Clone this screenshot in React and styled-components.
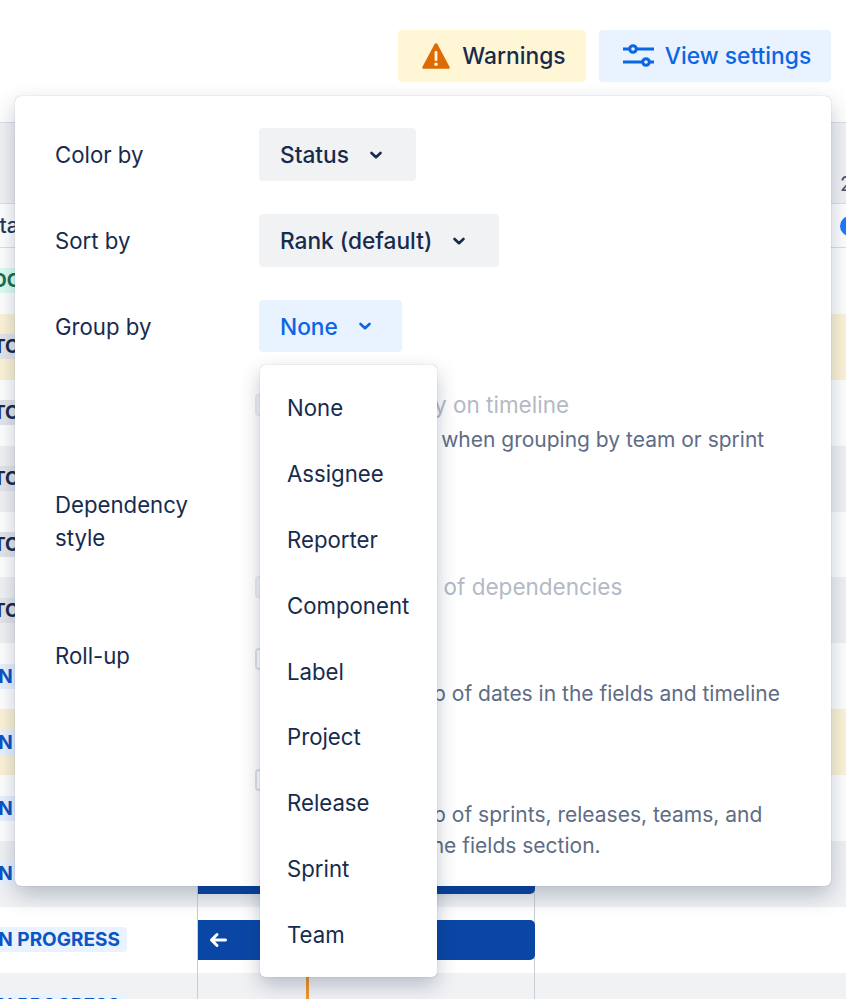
import React from "react";
import styled, { createGlobalStyle } from "styled-components";

const Global = createGlobalStyle`
  html, body { margin: 0; padding: 0; background: #fff; }
  body { font-family: Inter, "Liberation Sans", sans-serif; color: #172b4d; }
`;
const Page = styled.div`
  position: relative;
  width: 846px;
  height: 999px;
  overflow: hidden;
  background: #fff;
`;
const Toolbar = styled.div`
  display: flex;
  justify-content: flex-end;
  gap: 13px;
  height: 122px;
  box-sizing: border-box;
  padding: 30px 15px 0 0;
`;
const TopButton = styled.div`
  display: flex;
  align-items: center;
  justify-content: center;
  gap: ${(p) => p.$gap}px;
  width: ${(p) => p.$w}px;
  height: 52px;
  box-sizing: border-box;
  padding: 0 0 1px 4px;
  border-radius: 4px;
  background: ${(p) => p.$bg};
  color: ${(p) => p.$fg};
  font-size: 22.8px;
  font-weight: 500;
`;
const HeaderRow = styled.div`
  height: 82px;
  box-sizing: border-box;
  background: #f1f2f4;
  border-top: 1px solid #dcdfe4;
  border-bottom: 1px solid #dcdfe4;
  display: flex;
  justify-content: flex-end;
  align-items: flex-end;
  padding-bottom: 5px;
  color: #44546f;
  font-size: 20px;
`;
const HeaderYear = styled.span`
  width: 6px;
  overflow: hidden;
  padding-bottom: 2px;
`;
const FieldRow = styled.div`
  height: 44px;
  box-sizing: border-box;
  border-bottom: 1px solid #dcdfe4;
  display: flex;
  justify-content: space-between;
  align-items: center;
  font-size: 21px;
  color: #253858;
`;
const FieldName = styled.span`
  margin-left: -14px;
  font-weight: 500;
`;
const Dot = styled.span`
  width: 20px;
  height: 20px;
  margin-right: -14px;
  border-radius: 50%;
  background: #1d7afc;
`;
const Row = styled.div`
  display: grid;
  grid-template-columns: 197px 338px 1fr;
  height: 65.9px;
  background: ${(p) => p.$bg};
`;
const StatusCell = styled.div`
  display: flex;
  align-items: center;
`;
const Pill = styled.span`
  margin-left: -14px;
  height: 25px;
  display: flex;
  align-items: center;
  padding: 0 7px;
  border-radius: 4px;
  font-size: 19px;
  font-weight: 700;
  white-space: nowrap;
  background: ${(p) => p.$bg};
  color: ${(p) => p.$fg};
`;
const TimeCell = styled.div`
  position: relative;
  display: flex;
  align-items: center;
  border-left: 1px solid #c9ced6;
  border-right: 1px solid #c9ced6;
`;
const Bar = styled.div`
  width: calc(100% + 1px);
  flex: none;
  height: 40px;
  display: flex;
  align-items: center;
  padding-left: 11px;
  box-sizing: border-box;
  background: #0a47a5;
  border-radius: 0 5px 5px 0;
`;
const TodayLine = styled.div`
  position: absolute;
  left: 108px;
  top: 0;
  bottom: 0;
  width: 2.5px;
  background: #f0962a;
`;
const Panel = styled.div`
  position: absolute;
  left: 15px;
  top: 96px;
  width: 816px;
  height: 790px;
  box-sizing: border-box;
  padding: 32px 40px 0;
  background: #fff;
  border-radius: 6px;
  box-shadow: 0 0 1px rgba(9, 30, 66, 0.35), 0 9px 22px rgba(9, 30, 66, 0.25);
`;
const SettingRow = styled.div`
  display: grid;
  grid-template-columns: 204px 1fr;
  margin-top: ${(p) => p.$mt || 0}px;
`;
const Label = styled.div`
  font-size: 22.2px;
  line-height: 33px;
  max-width: 160px;
  padding-top: ${(p) => p.$pt || 0}px;
  color: #172b4d;
`;
const SelectWrap = styled.div`
  position: relative;
  width: max-content;
`;
const Select = styled.div`
  display: flex;
  align-items: center;
  width: max-content;
  gap: 19px;
  height: ${(p) => p.$h || 53}px;
  box-sizing: border-box;
  padding: 0 ${(p) => (p.$active ? 29 : 32)}px 0 21px;
  border-radius: 4px;
  font-size: 22.7px;
  font-weight: 500;
  background: ${(p) => (p.$active ? "#e9f2ff" : "#f1f2f4")};
  color: ${(p) => (p.$active ? "#0c66e4" : "#172b4d")};
`;
const Menu = styled.div`
  position: absolute;
  z-index: 2;
  left: 1px;
  top: 65px;
  width: 177px;
  height: 612px;
  box-sizing: border-box;
  padding: 10px 0 0;
  background: #fff;
  border-radius: 5px;
  box-shadow: 0 0 1px rgba(9, 30, 66, 0.4), 0 8px 20px rgba(9, 30, 66, 0.25);
`;
const MenuItem = styled.div`
  height: 65.8px;
  display: flex;
  align-items: center;
  padding-left: 27px;
  font-size: 22.2px;
  color: #172b4d;
`;
const CheckStack = styled.div`
  margin-left: -4px;
  display: flex;
  flex-direction: column;
`;
const CheckRow = styled.div`
  display: flex;
  align-items: center;
  gap: 15px;
  height: 33px;
  font-size: 22.5px;
  color: ${(p) => (p.$disabled ? "#b3bac5" : "#172b4d")};
  margin-top: ${(p) => p.$mt || 0}px;
`;
const Box = styled.span`
  width: 16px;
  height: 18px;
  flex: none;
  border: 2px solid ${(p) => (p.$disabled ? "#ebecf0" : "#dfe1e6")};
  border-radius: 4px;
  background: ${(p) => (p.$disabled ? "#f4f5f7" : "#fff")};
`;
const Help = styled.div`
  margin: 3px 0 0 27px;
  font-size: 21px;
  line-height: 31px;
  color: #5e6c84;
  white-space: nowrap;
`;

const Chevron = () => (
  <svg width="16" height="16" viewBox="0 0 16 16" fill="none" stroke="currentColor" strokeWidth="2.6" strokeLinecap="round" strokeLinejoin="round">
    <path d="M3.5 6 L8 10.2 L12.5 6" />
  </svg>
);
const WarnIcon = () => (
  <svg width="28" height="28" viewBox="0 0 28 28">
    <path d="M14 1.2 C14.6 1.2 15.1 1.5 15.4 2 L27.6 25 C28 25.9 27.5 26.8 26.5 26.8 L1.5 26.8 C0.5 26.8 0 25.9 0.4 25 L12.6 2 C12.9 1.5 13.4 1.2 14 1.2 Z" fill="#dd6a03" />
    <rect x="12.6" y="9" width="2.8" height="10" rx="1.2" fill="#fff6dc" />
    <circle cx="14" cy="22.2" r="1.8" fill="#fff6dc" />
  </svg>
);
const SlidersIcon = () => (
  <svg width="31" height="24" viewBox="0 0 31 24" fill="none" stroke="#0c66e4" strokeWidth="3">
    <path d="M0 5 H6.5 M13.5 5 H31 M0 18 H19.5 M26.5 18 H31" />
    <circle cx="10" cy="5" r="3.3" />
    <circle cx="23" cy="18" r="3.3" />
  </svg>
);
const ArrowLeft = () => (
  <svg width="18" height="16" viewBox="0 0 18 16" fill="none" stroke="#fff" strokeWidth="3" strokeLinecap="round" strokeLinejoin="round">
    <path d="M16.5 8 H3 M8 2.5 L2.5 8 L8 13.5" />
  </svg>
);

const GREEN = { bg: "#dcfff1", fg: "#216e4e", text: "DONE" };
const GRAY = { bg: "#e4e6ea", fg: "#172b4d", text: "TO DO" };
const BLUE = { bg: "#e9f2ff", fg: "#0c55c5", text: "IN PROGRESS" };
const rows = [
  { bg: "#fff", s: GREEN },
  { bg: "#fdf3d6", s: GRAY },
  { bg: "#fff", s: GRAY },
  { bg: "#f1f2f4", s: GRAY },
  { bg: "#fff", s: GRAY },
  { bg: "#f1f2f4", s: GRAY },
  { bg: "#fff", s: BLUE },
  { bg: "#fdf3d6", s: BLUE },
  { bg: "#fff", s: BLUE },
  { bg: "#f1f2f4", s: BLUE, bar: true },
  { bg: "#fff", s: BLUE, bar: true, arrow: true },
  { bg: "#f1f2f4", s: BLUE, today: true },
];
const groupOptions = ["None", "Assignee", "Reporter", "Component", "Label", "Project", "Release", "Sprint", "Team"];

export default function App() {
  return (
    <Page>
      <Global />
      <Toolbar>
        <TopButton $w={188} $gap={12} $bg="#fff6d6" $fg="#172b4d"><WarnIcon />Warnings</TopButton>
        <TopButton $w={232} $gap={11} $bg="#e9f2ff" $fg="#0c66e4"><SlidersIcon />View settings</TopButton>
      </Toolbar>
      <HeaderRow><HeaderYear>2</HeaderYear></HeaderRow>
      <FieldRow><FieldName>Status</FieldName><Dot /></FieldRow>
      {rows.map((r, i) => (
        <Row key={i} $bg={r.bg}>
          <StatusCell><Pill $bg={r.s.bg} $fg={r.s.fg}>{r.s.text}</Pill></StatusCell>
          <TimeCell>
            {r.bar && <Bar>{r.arrow && <ArrowLeft />}</Bar>}
            {r.today && <TodayLine />}
          </TimeCell>
        </Row>
      ))}
      <Panel>
        <SettingRow>
          <Label $pt={10}>Color by</Label>
          <div><Select>Status<Chevron /></Select></div>
        </SettingRow>
        <SettingRow $mt={33}>
          <Label $pt={10}>Sort by</Label>
          <div><Select>Rank (default)<Chevron /></Select></div>
        </SettingRow>
        <SettingRow $mt={33}>
          <Label $pt={10}>Group by</Label>
          <SelectWrap>
            <Select $active $h={52}>None<Chevron /></Select>
            <Menu>{groupOptions.map((o) => <MenuItem key={o}>{o}</MenuItem>)}</Menu>
          </SelectWrap>
        </SettingRow>
        <SettingRow $mt={36}>
          <div />
          <CheckStack>
            <CheckRow $disabled><Box $disabled />Show capacity on timeline</CheckRow>
            <Help>Only applicable when grouping by team or sprint</Help>
          </CheckStack>
        </SettingRow>
        <SettingRow $mt={33}>
          <Label>Dependency style</Label>
          <CheckStack>
            <CheckRow $mt={82} $disabled><Box $disabled />Show number of dependencies</CheckRow>
          </CheckStack>
        </SettingRow>
        <SettingRow $mt={36}>
          <Label>Roll-up</Label>
          <CheckStack>
            <CheckRow $mt={3}><Box />Dates</CheckRow>
            <Help>Show the roll-up of dates in the fields and timeline</Help>
            <CheckRow $mt={54}><Box />Others</CheckRow>
            <Help>Show the roll-up of sprints, releases, teams, and<br />estimations in the fields section.</Help>
          </CheckStack>
        </SettingRow>
      </Panel>
    </Page>
  );
}
